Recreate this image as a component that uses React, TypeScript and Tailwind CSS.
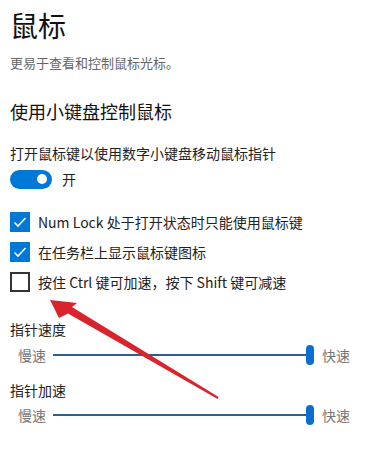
import React from 'react';

const font = { fontFamily: '"Noto Sans CJK SC", "Noto Sans", sans-serif' };

function Checkbox({ checked, label }: { checked: boolean; label: string }) {
  return (
    <div className="flex items-center h-[20px]">
      {checked ? (
        <div className="w-[20px] h-[20px] bg-[#0078d7] flex items-center justify-center">
          <svg width="14" height="14" viewBox="0 0 14 14">
            <polyline points="1.5,7.5 5,11 12.5,3" fill="none" stroke="white" strokeWidth="1.6" />
          </svg>
        </div>
      ) : (
        <div className="w-[20px] h-[20px] border-2 border-[#333]" />
      )}
      <span className="ml-[8px] text-[14px] leading-[20px] text-[#222]">{label}</span>
    </div>
  );
}

function Slider() {
  return (
    <div className="flex items-center h-[20px] ml-[8px]">
      <span className="w-[28px] text-[14px] leading-[20px] text-[#777]">慢速</span>
      <div className="ml-[7px] w-[253px] h-[2px] bg-[#2b5f8e]" />
      <div className="w-[8px] h-[20px] rounded-full bg-[#0a6fcf]" />
      <span className="ml-[8px] text-[14px] leading-[20px] text-[#777]">快速</span>
    </div>
  );
}

export default function App() {
  return (
    <div className="relative w-[369px] h-[449px] bg-white overflow-hidden pl-[10px]" style={font}>
      <h1 className="pt-[7px] text-[28px] leading-[36px] text-[#111]">鼠标</h1>
      <p className="mt-[10px] text-[13px] leading-[20px] text-[#666]">更易于查看和控制鼠标光标。</p>
      <h2 className="mt-[25px] text-[18px] leading-[26px] text-[#111]">使用小键盘控制鼠标</h2>
      <div className="mt-[19px] text-[14px] leading-[20px] text-[#222]">打开鼠标键以使用数字小键盘移动鼠标指针</div>
      <div className="mt-[6px] flex items-center h-[20px]">
        <div className="w-[42px] h-[19px] rounded-full bg-[#0078d7] flex items-center justify-end pr-[5px]">
          <div className="w-[10px] h-[10px] rounded-full bg-white" />
        </div>
        <span className="ml-[10px] text-[14px] leading-[20px] text-[#222]">开</span>
      </div>
      <div className="mt-[23px] flex flex-col gap-[10px]">
        <Checkbox checked label="Num Lock 处于打开状态时只能使用鼠标键" />
        <Checkbox checked label="在任务栏上显示鼠标键图标" />
        <Checkbox checked={false} label="按住 Ctrl 键可加速，按下 Shift 键可减速" />
      </div>
      <div className="mt-[27px] text-[14px] leading-[20px] text-[#222]">指针速度</div>
      <div className="mt-[6px]">
        <Slider />
      </div>
      <div className="mt-[15px] text-[14px] leading-[20px] text-[#222]">指针加速</div>
      <div className="mt-[5px]">
        <Slider />
      </div>

      <svg className="absolute left-0 top-0 pointer-events-none" width="369" height="449" viewBox="0 0 369 449">
        <polygon points="50,300 77,303 72,307 218.6,397 217.6,399 68,313.5 59,318" fill="#d9232d" />
      </svg>
    </div>
  );
}
